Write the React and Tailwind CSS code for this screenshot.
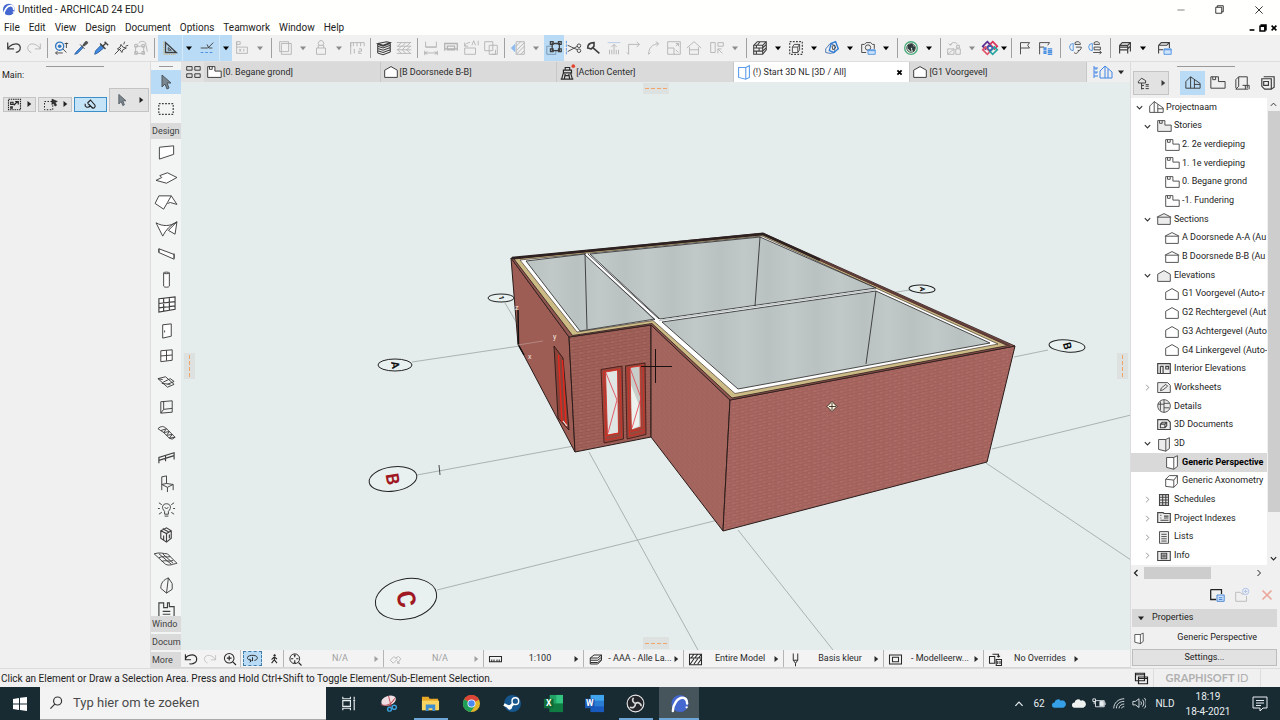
import React from 'react';
import clsx from 'clsx';

const BRICK = '#a86661';

// All glyphs are drawn on a 20x20 grid, stroke follows the text color
const glyphs = {
  undo: <path d="M3 4v7h7M3 11C6 5 16 3 17 9.500c0 3-2 5-5 5.500" strokeWidth="1.400" />,
  redo: <path d="M17 5v6h-6M17 11C14 5 4 3 3 9.500c0 3 2 5 4 5.500" />,
  find: (
    <>
      <circle cx="8.500" cy="8" r="4.500" stroke="#2f78c4" strokeWidth="1.500" />
      <circle cx="8.500" cy="8" r="2" fill="#2f78c4" stroke="none" />
      <path d="M12 11l4 4M4 15.500h8M4 15.500l2-2M4 15.500l2 2M16 4v6M14 5h4" />
    </>
  ),
  pick: (
    <>
      <path d="M11 8L5 14l-2 3 3-1 6-6z" fill="#3f8ae0" stroke="#2c5f9e" />
      <path d="M9 6l5 5M12 7l3-4c2-1 3 1 2 2l-4 3z" fill="#555" />
    </>
  ),
  inject: (
    <>
      <path d="M10 7l-6 6-1 4 4-2 6-5z" fill="#3f8ae0" stroke="#2c5f9e" />
      <path d="M9 5l6 6M12 8l4-4M14 3l4 4" strokeWidth="1.500" />
    </>
  ),
  wand: <path d="M3 17l7-7M10 6l2 3 4 1-4 2-1 3-2-3-3-1 3-2zM14 3l-1 3M18 7l-3 1" />,
  morphParam: <path d="M4 8h9v8H4zM3 6h3v3H3zM11 6h3v3h-3zM3 14h3v3H3zM11 14h3v3h-3zM7 5c2-3 6-3 8-1l2 10" />,
  triangle: (
    <>
      <path d="M5 4v11h12z" strokeWidth="1.500" />
      <path d="M8 9.500v3h3.500z" />
      <path d="M3 3v14h14" stroke="#d8a650" strokeDasharray="1 1" />
    </>
  ),
  guides: (
    <>
      <path d="M3 10h8M11 10l6-6M10 6l2 4M12 10h4" />
      <path d="M3 15h14" stroke="#3f8ae0" strokeDasharray="3 2" />
    </>
  ),
  coords: <path d="M4 3h4v3H4zM4 3v6M4 9h12v7H4zM7 11l2 3M9 11l-2 3M12 11v3" />,
  layers2: <path d="M4 3h10v11H4zM6 5h11v12H6z" />,
  stamp: <path d="M5 10h10v7H5zM7 10V7h6v3M8 7a3 3 0 1 1 4 0" />,
  ruler12: <path d="M3 17V4h15M3 4v5M6 4v4M10 4v4M14 4v4M18 4v4M7 11v5M12 11h3v2.500h-3V16h3" />,
  stack: (
    <path d="M3 5l10-2 4 1-8 3zM3 5v1l6 2 8-3V4M3 8l6 2 8-3M3 10.500l6 2 8-3M3 13l6 2 8-3M3 15.500l6 2 8-3M3 5v10.500M17 4v10.500" strokeWidth="1.200" />
  ),
  hatch: <path d="M2 4h16M2 8h16M2 12h16M2 16h16M3 8l4-4M8 8l4-4M13 8l4-4M3 12l4-4M8 12l4-4M13 12l4-4M3 12l4 4M8 12l4 4M13 12l4 4" />,
  dimA: <path d="M4 3v6h12V3M4 9h12M3 13v5M17 13v5M3 15.500h14M6 14l-3 1.500 3 1.500M14 14l3 1.500-3 1.500" />,
  dimB: <path d="M3 5h14v6H3zM6 8h8v4H6zM3 11v2M17 11v2" strokeWidth="1.400" />,
  dimC: <path d="M3 10h12v7H3zM3 8c1-3 3-4 6-4M3 8V4M3 8h4M11 7l2-5 2 5M18 2v5" />,
  dimD: <path d="M3 3h9v4h5v10H8v-4H3zM8 7h4v6H8zM15 12v5l-4 0" />,
  wallEdge: (
    <>
      <path d="M8 3h9v14H8zM8 8l5-5M8 13l9-9M8 17l9-9M13 17l4-4" />
      <path d="M7 5v10l-5-5z" fill="#8fbcec" stroke="none" />
    </>
  ),
  group: (
    <>
      <path d="M2 8h6M2 8v9h10v-5" stroke="#7593ad" />
      <path d="M8 5h8v8H8zM6 3h3v3H6zM15 3h3v3h-3zM6 11h3v3H6zM15 11h3v3h-3z" strokeWidth="1.400" />
    </>
  ),
  scissors: (
    <>
      <path d="M3 7l11 5M3 14l11-6" />
      <circle cx="15.500" cy="7.500" r="2" />
      <circle cx="15.500" cy="13" r="2" />
      <path d="M1.500 2v15" stroke="#4a90e2" strokeDasharray="3 1" />
    </>
  ),
  axe: <path d="M8 9l8 7M3 10c0-4 2-6 7-6v4l-3 3c-2 0-3-1-4-1z" strokeWidth="1.800" />,
  adjust: (
    <>
      <path d="M3 4h14" stroke="#b3cbe8" />
      <path d="M10 6v11M7 9l3-3 3 3M5 12v5M15 12v5M7.500 12v5M12.500 12v5" />
    </>
  ),
  cornerIcon: <path d="M4 17V6h12M4 17l-2-2M16 6l-3-3M16 6l-3 3" />,
  fillet: <path d="M4 17C4 10 8 6 15 5M15 5l-3-2M15 5l-2 3M4 17l2-2" />,
  resize: <path d="M3 3h14v14H3zM3 10h7v7M12 5h3v3M12 8l3-3M12 12l3 3" />,
  roofTrim: <path d="M2 10l8-7 8 7M5 9v8h10V9M5 12h10" />,
  align: <path d="M3 4h5v11H3zM11 4h6v4h-6zM11 11l5 5M11 11v5M11 11h4" />,
  brick3d: (
    <path d="M3 7l4-4h10v9l-4 5H3zM3 7h10v10M13 7l4-4M3 10h10l4-4M3 13.500h10l4-4M6 7v3M9 10v3.500M6 13.500v3.500M10 3L7 7" strokeWidth="1.200" />
  ),
  marquee3d: (
    <>
      <path d="M3 3h14v14H3z" strokeDasharray="2 1.500" strokeWidth="1.300" />
      <path d="M6 9l2-3h6v6l-2 3H6zM6 9h6v6M12 9l2-3" />
    </>
  ),
  cut3d: (
    <>
      <path d="M3 11l5-6 5 2v8l-5 1-5-1z" stroke="#3f6fae" />
      <path d="M9 5l5-2 3 8-5 4-5-2z" stroke="#2e7cd6" strokeWidth="1.500" />
      <path d="M10 8l3-1 1 3-3 2z" />
    </>
  ),
  camera: (
    <>
      <path d="M3 6h3l2-2h5l2 2h2v5M3 6v9h5" />
      <circle cx="10" cy="9.500" r="3" />
      <path d="M10 12h8v5h-8z" fill="#cfe3fb" stroke="#4a90e2" />
      <path d="M10 13h8" stroke="#4a90e2" />
    </>
  ),
  globe: (
    <>
      <circle cx="10" cy="10" r="7" stroke="#4caf7c" strokeWidth="1.500" />
      <circle cx="10" cy="10" r="4.700" fill="#dcefe5" stroke="#2f3b3a" />
      <path d="M7 7l4-1 1 2-3 2 1 3-3-3zM12 9l2 0-1 4-1-1z" fill="#2f3b3a" stroke="#2f3b3a" strokeWidth="1.500" />
    </>
  ),
  teamFade: <path d="M3 11h7v6H3zM3 17l7-6M12 11h5v6h-5zM13 7h3v3h-3zM6 7c1-4 6-4 8-1M6 7L4 5M6 7l2-2" />,
  bimx: (
    <>
      <path d="M7 3l3 3-5 5-3-3z" stroke="#5c2d91" strokeWidth="2" />
      <path d="M13 3l5 5-3 3-5-5z" stroke="#d8355b" strokeWidth="2" />
      <path d="M5 9l5 5-3 3-5-5z" stroke="#e0556d" strokeWidth="2" />
      <path d="M15 9l3 3-5 5-3-3z" stroke="#2aa6a0" strokeWidth="2" />
      <path d="M7 10l3-3 3 3-3 3z" stroke="#3b62b5" strokeWidth="1.500" />
    </>
  ),
  flag: <path d="M5 17V4h10l-2 3 2 3H5" />,
  flagList: (
    <>
      <path d="M4 17V4h11l-2 3M4 9h5" />
      <path d="M9 10h2v2H9zM13 11h5M9 14h2v2H9zM13 13h5M13 15h5M13 17h5" stroke="#4a90e2" strokeWidth="1.500" />
    </>
  ),
  linkA: (
    <>
      <path d="M8 5a4 4 0 1 0 0 8z" stroke="#4a90e2" />
      <path d="M10 4c3-2 6-1 6 2h-6zM11 9h6c0 3-2 4-4 4M9 15c2 2 4 1 5-2" />
    </>
  ),
  linkB: (
    <>
      <path d="M7 5a4 4 0 1 0 0 8z" stroke="#4a90e2" />
      <path d="M9 4c3-2 6-1 6 2H9zM9 9h7v3H9zM8 15h9M15 13l2 2-2 2" />
    </>
  ),
  bim: <path d="M4 7l3-3h9v10M4 7h9l3-3M4 7v9M13 7v9M4 12h9M4 9h9M16 8l-3 3" strokeWidth="1.300" />,
  bimSet: (
    <>
      <path d="M4 7l3-3h9v6M4 7h9l3-3M4 7v9M4 12h5" strokeWidth="1.200" />
      <path d="M10 11h8v6h-8z" fill="#cfe3fb" stroke="#4a90e2" />
      <path d="M10 12h8" stroke="#4a90e2" />
    </>
  ),
  cursor: <path d="M6 3v12l3-3 2 5 2-1-2-5h4z" fill="#7c868e" stroke="#4d565e" />,
  marquee: <path d="M2 4h16v12H2z" strokeDasharray="2 1.500" strokeWidth="1.300" />,
  wall: <path d="M2.500 5.500L17.500 4v9l-15 5z" fill="#fff" />,
  slab: <path d="M-1 13l6-3-2-2 8-3 10 5-11 6z" fill="#fff" />,
  roof: <path d="M-2 11L2 3h13l-4 7-4 7zM15 3l6 9-7-2-3 1" fill="#fff" />,
  shell: <path d="M-1 4c7 4 15 4 22-1-7 3-12 9-15 15zM21 3l-9 9 7 4z" fill="#fff" />,
  beam: <path d="M2 5l16 6v5L2 9zM2 5v4M18 10v5" fill="#fff" />,
  column: <path d="M7 3c0-1 6-1 6 0v14c0 1.500-6 1.500-6 0zM7 3c0 1.200 6 1.200 6 0" fill="#fff" />,
  curtain: <path d="M2 4l17-2v13L2 18zM7 3v14M13 2.500V16M2 9l17-2M2 13.500l17-2" fill="#fff" strokeWidth="1.200" />,
  door: <path d="M6 4l9-1v13l-9 2zM8 10v2" fill="#fff" />,
  window: <path d="M4 5l12-1v11L4 16.500zM10 4.500v11M4 10.500l12-1" fill="#fff" />,
  skylight: <path d="M1 7l8-2 9 8-7 3zM6 11l8-4 4 3-7 3M1 7l5 1M5 12l9 1" />,
  opening: <path d="M4 5l12-1v12L4 17zM7 4.500V13l9-1M7 13l-3 4" />,
  stair: <path d="M1 6c3-3 6-3 9 0l9 9M1 6l3 2 6-2-3 4 6-1-3 4 6-1-3 4 6-1M4 8l3 2M7 10l3 3M10 13l3 3 3 1 3-2" />,
  railing: <path d="M2 16v-6l16-5v7M2 10l16-5M2 13l16-5M9 8v6" strokeWidth="1.200" />,
  object: <path d="M5 3l5-1v8l-5 1zM5 11v6M5 11l6 3 6-3-7-1M11 14v5M17 11v6" />,
  lamp: (
    <>
      <path d="M8 13c-4-4-2-8 2-8s6 4 2 8v3H8zM8 18h4M8 9l2 1 2-1" />
      <path d="M1 10h2M17 10h2M2 4l3 2M18 4l-3 2M2 16l3-2M18 16l-3-2" />
    </>
  ),
  zone: <path d="M4 6l6-3 5 3v8l-5 4-6-4zM4 6l6 3 5-3M10 9v9M6 4l6 3M7 11v5M13 10v4" strokeWidth="1.200" />,
  mesh: <path d="M-3 4c6-2 10 0 14 0l10 10c-5 1-8 3-12 1zM2 4l13 11M6 4l11 10M2 8c4-2 8 0 12-1M5 12c4-2 8 1 12-1" />,
  morph: <path d="M4 13C4 7 7 4 12 2l4 6v6l-6 4zM12 2l-2 16" />,
  drawing: <path d="M2 3h5v5h4V3h2v4h5v11H2zM6 12h8M6 15h8" strokeWidth="1.200" />,
  story: <path d="M3 4v12h15V9h-7V4zM5 4v3h3V4" fill="#fff" />,
  section: <path d="M3 8h14v8H3zM2 8l8-4 8 4" />,
  elevation: <path d="M3 8l7-4 7 4v8H3z" fill="#fff" />,
  perspective: <path d="M4 5l8 0 4-2v12l-4 3-8-2zM12 5v13" fill="#fff" />,
  perspectiveBlue: <path d="M4 5l8 0 4-2v13l-4 2-8-2zM12 5v13" fill="#fff" stroke="#5b9bea" strokeWidth="1.200" />,
  axon: <path d="M3 8l4-4h9v9l-4 4-9-1zM3 8l9 1v8M12 9l4-5" fill="#fff" />,
  house: <path d="M3 16V9l5-5 10 7v5zM8 4v12M12 7v9M12 12h6" fill="#fff" />,
  houseBlue: <path d="M8 16V9l5-5 7 6v6zM13 4v12M16 7v9M2 4v12M2 6h4M2 10h4M2 14h4M4 6v2M4 10v2" stroke="#3f84e5" />,
  tower: (
    <>
      <path d="M6 8h9v3H6zM8 8V5h5v3M6 11L4 18h3l1-6M14 11l2 7h-3l-1-6M3 18h14M8 14h5" strokeWidth="1.300" />
      <circle cx="17" cy="3.500" r="2" fill="#e5432d" stroke="none" />
    </>
  ),
  gridTabs: <path d="M3 4h6v4H3zM12 4h6v4h-6zM3 12h6v4H3zM12 12h6v4h-6z" />,
  interior: <path d="M3 4h14v11H3zM6 7h3v8M6 15V7M12 7h3v3h-3z" strokeWidth="1.300" />,
  worksheet: <path d="M3 4h11l3 3v8H3zM6 13l1-3 5-4 2 2-5 4z" />,
  details: <path d="M10 3a7 7 0 1 0 .1 0M10 3v14M3 8h7M10 7h6M10 12h6M6 5v10" />,
  doc3d: <path d="M3 4h11l3 3v8H3zM6 9l2-2h5v4l-2 2H6zM6 9h5v4M11 9l2-2" strokeWidth="1.200" />,
  schedule: <path d="M5 4h10v12H5zM8.500 4v12M12 4v12M5 7h10M5 10h10M5 13h10" strokeWidth="1.200" />,
  indexes: <path d="M3 4h6l1 1h7v10H3zM6 7h1M6 10h1M6 12.500h9M10 8h5M10 10h5" strokeWidth="1.300" />,
  lists: <path d="M5 4h10v13H5zM7 7h6M7 9.500h6M7 12h6M7 14.500h6" />,
  info: <path d="M3 5h14v10H3zM7 7h6v6H7zM8 9h4M8 11h4" strokeWidth="1.200" />,
  layoutBook: <path d="M3 16V7l3-3v10l-3 3h13M6 4h9v8M15 12v4M10 13h7v4M13 13v4" />,
  publisher: <path d="M6 4h11v9M17 4v11l-3 2M4 6h10v11H7l-3-3zM6 9h5v4H6z" strokeWidth="1.200" />,
  navTree: <path d="M3 8l4-4 5 3v3H3zM7 10v8M7 13h3M7 17h3M12 12h4M12 14h4M12 17h4" strokeWidth="1.200" />,
  favorites: (
    <>
      <path d="M2 3h16v14H2z" strokeDasharray="2 1" strokeWidth="1.500" />
      <path d="M5 7h3v3H5zM5 13h2v2H5zM9 11l5-5M11 6h4v4" strokeWidth="1.600" />
    </>
  ),
  marqueeArrow: (
    <>
      <path d="M2 6h11v11H2z" strokeDasharray="2 2" strokeWidth="1.300" />
      <path d="M12 3l7 3-3 1 2 4-2 1-2-4-2 2z" fill="#333" />
    </>
  ),
  magnet: <path d="M6 8l6 6c2 2 5 0 4-3l-6-7M6 8l4-4 6 7M10 12c-5 4-8 0-7-3" strokeWidth="1.500" />,
  back: <path d="M3 4v7h7M3 11c0-6 12-9 14-2 1 5-4 8-9 7" strokeWidth="1.400" />,
  zoomIn: (
    <>
      <circle cx="9" cy="9" r="6" strokeWidth="1.300" />
      <path d="M13.500 13.500l4 4M6 9h6M9 6v6" strokeWidth="1.500" />
    </>
  ),
  zoomFit: (
    <>
      <circle cx="9" cy="9" r="6.500" strokeWidth="1.300" />
      <path d="M14 14l4 4M9 4v3M9 11v3M4 9h3M11 9h3M8 5l1-1 1 1M8 13l1 1 1-1" strokeWidth="1.500" />
    </>
  ),
  orbit: <path d="M13 13c5-1 6-5 2-7-4-1.500-9-1-12 1-2 3 0 5 5 6M8 13l-3-2M8 13l-2 3M10 8v6" strokeWidth="1.500" />,
  walk: (
    <>
      <circle cx="11" cy="4" r="1.500" fill="currentColor" />
      <path d="M10 7l1 5 4 5M10 12l-4 5M10 7l-4 4M11 7l4 3" strokeWidth="1.800" />
    </>
  ),
  orient: <path d="M3 11l5-5 4 4-5 5zM10 8l4-2 3 3-4 6M13 15v-3M13 15h3" />,
  scale: <path d="M2 6h16v7H2zM5 10v3M8 10v3M12 10v3M15 10v3" strokeWidth="1.400" />,
  layerStack: <path d="M3 8l5-4h10l-5 4zM3 8v3h10l5-4M3 11v3h10l5-4M3 14v2h10l5-5V4" strokeWidth="1.300" />,
  structure: <path d="M2 3h16v14H2zM2 8h16M4 8l4-5M9 8l4-5M14 8l4-5M3 16l5-7M8 16l5-7M13 16l5-7" strokeWidth="1.400" />,
  pen: <path d="M7 2v9l3 4 3-4V2M10 15v4M7 11h6" strokeWidth="1.300" />,
  modelView: <path d="M2 4h16v12H2zM6 7h8v6H6z" strokeWidth="1.400" />,
  overrides: <path d="M2 6h7v9H2zM6 3h8v4M14 7l-2-2M14 7l2-2M11 10h7v8h-7zM13 12v4M16 12v4" strokeWidth="1.400" />,
  propsBox: (
    <>
      <path d="M3 4h12v5M3 4v11h6" strokeWidth="1.400" />
      <path d="M10 10h8v7h-8z" fill="#cfe3fb" stroke="#3f7fd0" />
      <path d="M12 13h4M12 15h4" stroke="#3f7fd0" />
    </>
  ),
  newFolder: (
    <>
      <path d="M3 17V7h5l2 2h2M3 17h12v-6" />
      <circle cx="14" cy="6" r="3.500" stroke="#a9bfe8" />
      <path d="M12 6h4M14 4v4" stroke="#a9bfe8" />
    </>
  ),
  remove: <path d="M5 5l10 10M15 5L5 15" strokeWidth="1.800" />,
  windows2: <path d="M2 3h12v10H2zM2 5h12M6 8h12v9H6zM6 10h12" fill="#f0f0f0" strokeWidth="1.600" />,
  chevronDown: <path d="M4 7l6 6 6-6" strokeWidth="2.500" />,
  chevronRight: <path d="M7 4l6 6-6 6" strokeWidth="2" />,
  chevronLeft: <path d="M13 4l-6 6 6 6" strokeWidth="2.500" />,
  chevronUp: <path d="M4 13l6-6 6 6" strokeWidth="2" />,
  minimize: <path d="M4 10h12" />,
  restore: <path d="M5 7h8v8H5zM7 7V5h8v8h-2" />,
  close: <path d="M4 4l12 12M16 4L4 16" />,
  search: (
    <>
      <circle cx="12" cy="7.500" r="5" strokeWidth="1.500" />
      <path d="M8.500 11.500L3 17" strokeWidth="1.500" />
    </>
  ),
};

const Glyph = ({ name, className = 'size-5' }) => (
  <svg
    viewBox="0 0 20 20"
    className={clsx('shrink-0 overflow-visible', className)}
    fill="none"
    stroke="currentColor"
    strokeWidth="1"
    aria-hidden="true"
  >
    {glyphs[name]}
  </svg>
);

const Caret = ({ right, className }) => (
  <svg viewBox="0 0 8 8" className={clsx('shrink-0', className)} fill="currentColor" aria-hidden="true">
    {right ? <path d="M2 0l5 4-5 4z" /> : <path d="M0 2h8L4 7z" />}
  </svg>
);

const menus = ['File', 'Edit', 'View', 'Design', 'Document', 'Options', 'Teamwork', 'Window', 'Help'];

const toolbar = [
  { icon: 'undo' }, { icon: 'redo', off: true }, 'sep',
  { icon: 'find' }, { icon: 'pick' }, { icon: 'inject' }, { icon: 'wand' }, { icon: 'morphParam', off: true }, 'sep',
  { icon: 'triangle', caret: true, on: true }, { icon: 'guides', caret: true, on: true }, { icon: 'coords', caret: true, off: true }, 'sep',
  { icon: 'layers2', caret: true, off: true }, { icon: 'stamp', caret: true, off: true }, { icon: 'ruler12', off: true }, 'sep',
  { icon: 'stack' }, { icon: 'hatch', off: true }, 'sep',
  { icon: 'dimA', off: true }, { icon: 'dimB', off: true }, { icon: 'dimC', off: true }, { icon: 'dimD', off: true }, 'sep',
  { icon: 'wallEdge', caret: true, off: true }, { icon: 'group', on: true }, { icon: 'scissors' }, { icon: 'axe' },
  { icon: 'adjust', off: true }, { icon: 'cornerIcon', off: true }, { icon: 'fillet', off: true }, { icon: 'resize', off: true },
  { icon: 'roofTrim', off: true }, { icon: 'align', caret: true, off: true, gap: true }, 'sep',
  { icon: 'brick3d', caret: true }, { icon: 'marquee3d', caret: true }, { icon: 'cut3d', caret: true }, { icon: 'camera', caret: true }, 'sep',
  { icon: 'globe', caret: true }, 'sep',
  { icon: 'teamFade', caret: true, off: true }, { icon: 'bimx', caret: true, tight: true }, 'sep',
  { icon: 'flag' }, { icon: 'flagList' }, 'wide',
  { icon: 'linkA' }, { icon: 'linkB' }, 'wide',
  { icon: 'bim', caret: true }, { icon: 'bimSet', gap: true },
];

const designTools = [
  'wall', 'slab', 'roof', 'shell', 'beam', 'column', 'curtain', 'door', 'window', 'skylight',
  'opening', 'stair', 'railing', 'object', 'lamp', 'zone', 'mesh', 'morph', 'drawing',
];

const tabs = [
  { label: '[0. Begane grond]', icon: 'story' },
  { label: '[B Doorsnede B-B]', icon: 'elevation' },
  { label: '[Action Center]', icon: 'tower' },
  { label: '(!) Start 3D NL [3D / All]', icon: 'perspectiveBlue', active: true },
  { label: '[G1 Voorgevel]', icon: 'elevation' },
];

const tree = [
  { level: 0, label: 'Projectnaam', icon: 'house', open: true },
  { level: 1, label: 'Stories', icon: 'story', open: true },
  { level: 2, label: '2. 2e verdieping', icon: 'story' },
  { level: 2, label: '1. 1e verdieping', icon: 'story' },
  { level: 2, label: '0. Begane grond', icon: 'story' },
  { level: 2, label: '-1. Fundering', icon: 'story' },
  { level: 1, label: 'Sections', icon: 'section', open: true },
  { level: 2, label: 'A Doorsnede A-A (Au', icon: 'section' },
  { level: 2, label: 'B Doorsnede B-B (Au', icon: 'section' },
  { level: 1, label: 'Elevations', icon: 'elevation', open: true },
  { level: 2, label: 'G1 Voorgevel (Auto-r', icon: 'elevation' },
  { level: 2, label: 'G2 Rechtergevel (Aut', icon: 'elevation' },
  { level: 2, label: 'G3 Achtergevel (Auto', icon: 'elevation' },
  { level: 2, label: 'G4 Linkergevel (Auto-', icon: 'elevation' },
  { level: 1, label: 'Interior Elevations', icon: 'interior' },
  { level: 1, label: 'Worksheets', icon: 'worksheet', open: false },
  { level: 1, label: 'Details', icon: 'details' },
  { level: 1, label: '3D Documents', icon: 'doc3d' },
  { level: 1, label: '3D', icon: 'perspective', open: true },
  { level: 2, label: 'Generic Perspective', icon: 'perspective', selected: true },
  { level: 2, label: 'Generic Axonometry', icon: 'axon' },
  { level: 1, label: 'Schedules', icon: 'schedule', open: false },
  { level: 1, label: 'Project Indexes', icon: 'indexes', open: false },
  { level: 1, label: 'Lists', icon: 'lists', open: false },
  { level: 1, label: 'Info', icon: 'info', open: false },
];

const quickOptions = [
  { icon: 'zoomFit', label: 'N/A', offLabel: true },
  { icon: 'orient', label: 'N/A', offLabel: true, offIcon: true },
  { icon: 'scale', label: '1:100' },
  { icon: 'layerStack', label: '- AAA - Alle La...' },
  { icon: 'structure', label: 'Entire Model' },
  { icon: 'pen', label: 'Basis kleur' },
  { icon: 'modelView', label: '- Modelleerw...' },
  { icon: 'overrides', label: 'No Overrides' },
];

const AppLogo = ({ className }) => (
  <svg viewBox="0 0 20 20" className={className} aria-hidden="true">
    <circle cx="10.500" cy="10" r="9" fill="#4468cf" />
    <path d="M3 18C3 11 8 4 13 4c3 0 5 2 5 6" fill="none" stroke="#fff" strokeWidth="2.500" strokeLinecap="round" />
    <circle cx="17.500" cy="14" r="1.200" fill="#fff" />
  </svg>
);

const TitleBar = () => (
  <header className="bg-[#fffffd]">
    <div className="flex h-[19px] items-center pl-[2px]">
      <AppLogo className="size-[13px]" />
      <h1 className="ml-[3px] flex-1 text-[10px] text-[#222]">Untitled - ARCHICAD 24 EDU</h1>
      <button aria-label="Minimize" className="flex w-[38px] justify-center text-[#777]"><Glyph name="minimize" className="size-3 stroke-[1.5]" /></button>
      <button aria-label="Restore" className="flex w-[38px] justify-center text-[#222]"><Glyph name="restore" className="size-[15px] stroke-[1.2]" /></button>
      <button aria-label="Close" className="flex w-[42px] justify-center text-[#222]"><Glyph name="close" className="size-3 stroke-[1.5]" /></button>
    </div>
    <div className="flex h-4 items-center pt-px pl-1 text-[10px] text-[#222]">
      <nav className="flex flex-1 gap-[9px]">
        {menus.map((m) => (
          <button key={m}>{m}</button>
        ))}
      </nav>
      <div className="flex items-end gap-px pr-[2px] text-black">
        <button aria-label="Minimize view"><Glyph name="minimize" className="size-2 stroke-[4]" /></button>
        <button aria-label="Restore view"><Glyph name="restore" className="size-3 stroke-[2.5]" /></button>
        <button aria-label="Close view" className="pb-[2px]"><Glyph name="close" className="size-2 stroke-[4]" /></button>
      </div>
    </div>
  </header>
);

const Toolbar = () => (
  <div className="flex h-[27px] items-stretch border-b border-[#dedede] bg-[#f1f1f1] pl-1">
    {toolbar.map((t, i) => {
      if (t === 'sep' || t === 'wide') {
        return (
          <div key={i} className={clsx('flex shrink-0 justify-center py-[3px]', t === 'wide' ? 'w-[10px]' : 'w-[7px]')}>
            <div className="w-px bg-[#a0a0a0]" />
          </div>
        );
      }
      const wide = t.on && t.caret;
      return (
        <div
          key={i}
          className={clsx('flex shrink-0', t.on && 'bg-[#b9dbf5]', t.off ? 'text-[#b3b3b3]' : 'text-[#3f3f3f]', t.gap && 'ml-[3px]')}
        >
          <button aria-label={t.icon} className={clsx('flex items-center justify-center', wide ? 'w-6' : 'w-5')}>
            <Glyph name={t.icon} className="size-[18px]" />
          </button>
          {t.caret && (
            <button
              aria-label={`${t.icon} options`}
              className={clsx(
                'flex items-center justify-center',
                wide ? 'w-[13px] border-l border-[#d4e9fa]' : t.tight ? 'w-2' : 'w-4',
                t.off ? 'text-[#8c8c8c]' : 'text-black'
              )}
            >
              <Caret className="size-[6px]" />
            </button>
          )}
        </div>
      );
    })}
  </div>
);

const InfoPanel = () => (
  <aside className="w-[150px] shrink-0 bg-[#f0f0f0] text-[9px] text-[#222]">
    <div className="mx-auto mt-1 h-px w-[58px] bg-[#999]" />
    <p className="mt-[2px] pl-[2px]">Main:</p>
    <div className="mt-[5px] flex items-end gap-[2px] pl-[3px]">
      <button aria-label="Favorites" className="flex h-[15px] w-[33px] items-center justify-center gap-1 border border-[#c4c4c4] bg-[#e3e3e3]">
        <Glyph name="favorites" className="size-[15px]" /><Caret right className="size-[6px]" />
      </button>
      <button aria-label="Selection area" className="flex h-[15px] w-[34px] items-center justify-center gap-1 border border-[#c4c4c4] bg-[#e3e3e3]">
        <Glyph name="marqueeArrow" className="size-[15px]" /><Caret right className="size-[6px]" />
      </button>
      <button aria-label="Magnet" className="flex h-[15px] w-[33px] items-center justify-center border border-[#3c8fc9] bg-[#c6e4f8]">
        <Glyph name="magnet" className="size-[15px]" />
      </button>
      <button aria-label="Arrow tool" className="flex h-6 w-[40px] items-center justify-center gap-2 border border-[#c4c4c4] bg-[#e3e3e3]">
        <Glyph name="cursor" className="size-4" /><Caret right className="size-[6px]" />
      </button>
    </div>
  </aside>
);

const Toolbox = () => (
  <aside className="flex w-[31px] shrink-0 flex-col border-l border-[#ddd] bg-[#f3f4f4] text-[9px] text-[#3f3f3f]">
    <div className="mx-auto mt-1 mb-[3px] h-px w-[14px] shrink-0 bg-[#999]" />
    <button aria-label="Arrow" className="flex h-6 shrink-0 items-center justify-center bg-[#b9dbf5]"><Glyph name="cursor" /></button>
    <button aria-label="Marquee" className="flex h-[29px] shrink-0 items-center justify-center"><Glyph name="marquee" className="size-[18px]" /></button>
    <h2 className="h-4 shrink-0 bg-[#dadada] pl-px leading-4">Design</h2>
    <div className="flex min-h-0 flex-1 flex-col justify-between overflow-hidden">
      {designTools.map((t, i) => (
        <button
          key={t}
          aria-label={t}
          className={clsx(
            'flex shrink-0 justify-center',
            i === designTools.length - 1 ? 'h-[18px] items-start pt-[2px]' : 'h-[25px] items-center'
          )}
        >
          <Glyph name={t} className="size-[19px]" />
        </button>
      ))}
    </div>
    <div className="z-10 flex shrink-0 flex-col gap-[2px] bg-[#f3f4f4] leading-4">
      {['Windo', 'Docum', 'More'].map((l) => (
        <button key={l} className="h-4 bg-[#dadada] pl-px text-left">{l}</button>
      ))}
    </div>
  </aside>
);

const Tabs = () => (
  <div className="flex h-5 shrink-0 bg-[#e2e2e2] text-[9px] text-[#2a2a2a]">
    <button aria-label="All tabs" className="flex w-[23px] items-center justify-center"><Glyph name="gridTabs" className="size-[18px]" /></button>
    {tabs.map((t) => (
      <div key={t.label} className={clsx('flex min-w-0 flex-1 items-center border-r border-[#c8c8c8] pr-[6px]', t.active ? 'bg-white' : 'bg-[#dadada]')}>
        <button className="flex flex-1 items-center whitespace-nowrap pl-px text-left">
          <Glyph name={t.icon} className="size-[18px]" /><span className="pt-px">{t.label}</span>
        </button>
        {t.active && (
          <button aria-label="Close tab" className="text-black"><Glyph name="close" className="size-[7px] stroke-[5]" /></button>
        )}
      </div>
    ))}
    <div className="flex w-[43px] items-center justify-center gap-[6px] bg-[#efefef]">
      <Glyph name="houseBlue" /><Caret className="size-[6px]" />
    </div>
  </div>
);

const AxisBubble = ({ x, y, rx, ry, tilt = 0, label, size, color = '#111', turn = 0 }) => (
  <g>
    <ellipse cx={x} cy={y} rx={rx} ry={ry} fill="#e8f0f0" stroke="#222" transform={`rotate(${tilt} ${x} ${y})`} />
    <text x={x} y={y} fontSize={size} fontWeight="700" fill={color} textAnchor="middle" dominantBaseline="central" transform={`rotate(${turn} ${x} ${y})`}>
      {label}
    </text>
  </g>
);

const Scene = () => (
  <svg viewBox="181 82 949 568" preserveAspectRatio="xMidYMid slice" className="block size-full" role="img" aria-label="3D model">
    <defs>
      <pattern id="brickRight" width="9" height="6" patternUnits="userSpaceOnUse" patternTransform="matrix(1 -0.2 0 1 0 0)">
        <rect width="9" height="6" fill={BRICK} />
        <path d="M0 .5h9M0 3.500h9M2 .5v3M6.500 3.500v3" stroke="#8d4d4a" strokeWidth=".7" opacity=".4" />
        <path d="M3 2h3M7 5h2" stroke="#bd7d75" strokeWidth="1" opacity=".5" />
      </pattern>
      <pattern id="brickFront" width="8" height="6" patternUnits="userSpaceOnUse" patternTransform="matrix(1 -0.16 0 1 0 0)">
        <rect width="8" height="6" fill="#a06159" />
        <path d="M0 .5h8M0 3.500h8M2 .5v3M6 3.500v3" stroke="#834843" strokeWidth=".7" opacity=".5" />
        <path d="M3 2h3" stroke="#b7786d" strokeWidth="1" opacity=".5" />
      </pattern>
      <pattern id="brickSide" width="5" height="5" patternUnits="userSpaceOnUse" patternTransform="matrix(1 1.2 0 1 0 0)">
        <rect width="5" height="5" fill="#a5665f" />
        <path d="M0 .5h5M2 .5v4" stroke="#925049" strokeWidth=".6" opacity=".3" />
      </pattern>
      <linearGradient id="plaster" x1="0" x2="24" y1="0" y2="0" gradientUnits="userSpaceOnUse" spreadMethod="reflect">
        <stop offset="0" stopColor="#bac1c1" />
        <stop offset="1" stopColor="#c1c8c8" />
      </linearGradient>
    </defs>
    <rect x="0" y="0" width="1400" height="760" fill="#e4edec" />

    {/* grid axes */}
    <g stroke="#9aa3a3" strokeWidth=".8">
      <path d="M412 362L560 340M417 475L590 443M437 590L730 517M589 452L698 650M738 530L833 650M986 463L1131 560M992 449L1131 415M1048 350L1014 357M505 303L518 325M890 293L910 290" />
      <path d="M439 465l1 10" stroke="#222" />
    </g>
    <AxisBubble x={501} y={298} rx={13} ry={4} label="1" size={7} turn={80} />
    <AxisBubble x={922} y={289} rx={13} ry={4} tilt={3} label="A" size={7} turn={90} />
    <AxisBubble x={395} y={365} rx={17} ry={6} label="A" size={11} turn={80} />
    <AxisBubble x={1067} y={346} rx={18} ry={6} tilt={5} label="B" size={11} turn={75} />
    <AxisBubble x={393} y={479} rx={24} ry={12} tilt={-8} label="B" size={18} color="#a01822" turn={80} />
    <AxisBubble x={406} y={599} rx={31} ry={20} tilt={-12} label="C" size={25} color="#a01822" turn={75} />

    {/* outer walls */}
    <g stroke="#2a1c1a" strokeWidth="1" strokeLinejoin="round">
      <path d="M511 258L569 337L575 452L518 344z" fill="#9d5d55" />
      <path d="M569 337L651 325V437L575 452z" fill="url(#brickFront)" />
      <path d="M651 325L730 400L723 531L651 437z" fill="url(#brickSide)" />
      <path d="M730 400L1015 346L987 462L723 531z" fill="url(#brickRight)" />
      {/* top of the cavity wall, outside to inside */}
      <path d="M511 258L763 233L1015 346L730 400L651 325L569 337z" fill="#8f5550" strokeWidth=".8" />
      <path d="M514 259L763 234.500L1008 345.500L732 398L652 323.500L572.500 335.500z" fill="#cdbb86" strokeWidth=".8" />
      <path d="M520 260L762 236L998 344L735 393.500L653 320.500L577 332z" fill="#fff" strokeWidth=".6" />
    </g>
    <path d="M512 258L763 234L820 260" fill="none" stroke="#2c2120" strokeWidth="2.500" />
    <path d="M820 260L1010 346" fill="none" stroke="#5d3b37" strokeWidth="2" />

    {/* rooms */}
    <g fill="url(#plaster)" stroke="#222" strokeWidth=".8">
      <path d="M526 261L585 254L655 319L580 331z" />
      <path d="M590 254L760 237L876 288L660 319z" />
      <path d="M662 322L876 291L990 343L738 389z" />
      <path d="M585 254L587 329M760 237L755 306M876 291L866 364" />
    </g>
    <path d="M659 320.500L876 289.500" stroke="#c3c9c9" strokeWidth="1.600" />
    <path d="M586 254L658 320" stroke="#fff" strokeWidth="2.500" />
    <path d="M584.500 254.500L655 320M588 254L659 319" stroke="#222" strokeWidth=".8" />

    {/* windows */}
    <path d="M554 346L563 358L569 430L558 418z" fill="#8a4238" stroke="#1d1110" strokeWidth=".8" />
    <path d="M558.500 355L562 422M562.500 360L566 426" stroke="#e8261c" strokeWidth="1.400" />
    <path d="M563 421l4 5" stroke="#eee" strokeWidth="1.200" />
    <g strokeWidth=".8">
      <path d="M601 369.500L622 366L623.500 439L604 443z" fill="#96493f" stroke="#3d1410" />
      <path d="M625.500 366L645 363L646 434.500L627 439z" fill="#96493f" stroke="#3d1410" />
      <path d="M603.500 371.500L620 369L621.500 437L606 440z" fill="none" stroke="#dd2a20" />
      <path d="M628 368L643 365.500L644 432.500L629.500 436z" fill="none" stroke="#dd2a20" />
      <path d="M605.500 372L617.500 370L618.500 433L607.500 435z" fill="#dfe6e3" stroke="#d3231b" />
      <path d="M630 367.500L640 366L641 427L631.500 430z" fill="#c7cec9" stroke="#d3231b" />
      <path d="M631 385L639 405V426L632 429z" fill="#eef2ee" />
      <path d="M606 373L617 400L608 433M630 368L641 398L632 428" fill="none" stroke="#e23a4a" />
      <path d="M605 436l14-3M629 432l14-3" stroke="#dd2a20" />
    </g>

    <path d="M518 310L518.500 345L524 355" fill="none" stroke="#111" strokeWidth="1.500" />
    <path d="M518 345L543 341" stroke="#b8928c" strokeWidth=".8" />
    <g fill="#f3e6dc" fontSize="7">
      <text x="515" y="310">z</text>
      <text x="553" y="339">y</text>
      <text x="528" y="359">x</text>
    </g>

    {/* crosshair and orbit cursor */}
    <path d="M655.500 349v34M641 366.500h31" stroke="#1a1010" />
    <g stroke="#201510" strokeWidth=".8" fill="#fff6df">
      <path d="M832 401.500L837 406.500L832 411.500L827 406.500z" />
      <path d="M832 403v7M829 406.500h7" />
    </g>

    {/* palette docking handles */}
    <g fill="#dde1df">
      <rect x="643" y="83" width="26" height="11" />
      <rect x="643" y="637" width="26" height="12" />
      <rect x="184" y="353" width="11" height="26" />
      <rect x="1117" y="353" width="11" height="26" />
    </g>
    <g fill="#f0a566">
      <path d="M645 88h4v1h-4zM651 88h4v1h-4zM657 88h4v1h-4zM663 88h4v1h-4z" />
      <path d="M645 643h4v1h-4zM651 643h4v1h-4zM657 643h4v1h-4zM663 643h4v1h-4z" />
      <path d="M189 355h1v4h-1zM189 361h1v4h-1zM189 367h1v4h-1zM189 373h1v4h-1z" />
      <path d="M1122 355h1v4h-1zM1122 361h1v4h-1zM1122 367h1v4h-1zM1122 373h1v4h-1z" />
    </g>
  </svg>
);

const QuickOptions = () => (
  <div className="flex h-[18px] shrink-0 items-stretch overflow-hidden border-b border-[#d5d5d5] bg-[#f3f3f3] text-[9px] text-[#2a2a2a]">
    <div className="flex w-[60px] shrink-0 items-center justify-around border-r border-[#c2c2c2]">
      <button aria-label="Previous zoom"><Glyph name="back" className="size-4" /></button>
      <button aria-label="Next zoom" className="text-[#bbb]"><Glyph name="redo" className="size-4" /></button>
      <button aria-label="Zoom"><Glyph name="zoomIn" className="size-4" /></button>
    </div>
    <div className="flex w-[42px] shrink-0 items-center gap-[2px] pl-[2px]">
      <button aria-label="Orbit" className="flex h-[15px] w-[19px] items-center justify-center border border-dashed border-[#3d7cab] bg-[#b9dbf5]">
        <Glyph name="orbit" className="size-[13px]" />
      </button>
      <button aria-label="Explore" className="flex flex-1 justify-center"><Glyph name="walk" className="size-3" /></button>
    </div>
    {quickOptions.map((q, i) => (
      <button key={i} className="flex w-[100px] shrink-0 items-center border-l border-[#b5b5b5] pt-px pr-1 pl-1">
        <Glyph name={q.icon} className={clsx('size-[15px]', q.offIcon && 'text-[#aaa]')} />
        <span className={clsx('flex-1 whitespace-nowrap pl-1 text-center', q.offLabel && 'text-[#a0a0a0]')}>{q.label}</span>
        <Caret right className={clsx('size-[6px]', q.offLabel && 'text-[#a0a0a0]')} />
      </button>
    ))}
  </div>
);

const Navigator = () => (
  <aside className="flex w-[150px] shrink-0 flex-col border-l border-[#dcdcdc] bg-[#f0f0f0] text-[9px] text-[#222]">
    <div className="mx-auto mt-1 h-px w-[58px] shrink-0 bg-[#999]" />
    <div className="flex h-[31px] shrink-0 items-center justify-between pl-[2px] text-[#3a3a3a]">
      <button aria-label="Project chooser" className="flex h-6 w-9 items-center justify-center gap-2 border border-[#c4c4c4] bg-[#e2e2e2]">
        <Glyph name="navTree" className="size-4" /><Caret right className="size-[6px]" />
      </button>
      <div className="flex">
        {['house', 'story', 'layoutBook', 'publisher'].map((n, i) => (
          <button key={n} aria-label={n} className={clsx('flex h-6 w-[25px] items-center justify-center', i === 0 && 'bg-[#b9dbf5]')}>
            <Glyph name={n} className="size-[19px] [&_*]:fill-none" />
          </button>
        ))}
      </div>
    </div>
    <div className="flex min-h-0 flex-1">
      <ul className="flex min-w-0 flex-1 flex-col overflow-hidden bg-white">
        {tree.map((n) => (
          <li key={n.label} className={clsx('min-h-0 flex-1', n.selected && 'bg-[#d9d9d9] font-bold text-black')}>
            <button
              className={clsx(
                'flex size-full items-center whitespace-nowrap text-left',
                n.level === 1 && 'pl-2',
                n.level === 2 && 'pl-4'
              )}
            >
              <span className={clsx('flex w-4 shrink-0 justify-center', n.open ? 'text-[#333]' : 'text-[#888]')}>
                {n.open !== undefined && <Glyph name={n.open ? 'chevronDown' : 'chevronRight'} className="size-[9px]" />}
              </span>
              <Glyph name={n.icon} className={clsx('mr-px size-[18px] text-[#444]', n.level === 1 && '[&_*]:fill-[#ececec]')} />
              <span>{n.label}</span>
            </button>
          </li>
        ))}
      </ul>
      <div className="flex w-[13px] shrink-0 flex-col items-center">
        <Glyph name="chevronUp" className="my-[2px] size-[9px]" />
        <div className="w-3 flex-[406] bg-[#cdcdcd]" />
        <div className="flex-[40]" />
        <Glyph name="chevronDown" className="my-[2px] size-[9px]" />
      </div>
    </div>
    <div className="flex h-4 shrink-0 items-center pr-4">
      <Glyph name="chevronLeft" className="size-[10px]" />
      <div className="ml-[3px] h-3 w-[67px] bg-[#cdcdcd]" />
      <div className="flex-1" />
      <Glyph name="chevronRight" className="size-[10px]" />
    </div>
    <div className="flex h-7 shrink-0 items-center justify-end gap-[7px] pr-1">
      <button aria-label="Settings"><Glyph name="propsBox" className="size-[18px]" /></button>
      <button aria-label="New folder" className="text-[#b9b9b9]"><Glyph name="newFolder" className="size-[18px]" /></button>
      <button aria-label="Delete" className="text-[#eba79b]"><Glyph name="remove" className="size-[18px]" /></button>
    </div>
    <div className="mr-[3px] ml-px shrink-0">
      <button className="flex h-[18px] w-full items-center gap-2 bg-[#d7d7d7] pl-[6px]"><Caret className="size-[6px]" />Properties</button>
      <div className="flex h-[22px] items-center">
        <Glyph name="perspective" className="size-[14px]" />
        <span className="flex-1 pr-5 text-right">Generic Perspective</span>
      </div>
      <button className="mb-[2px] block h-[17px] w-full border border-[#bdbdbd] bg-[#e2e2e2]">Settings...</button>
    </div>
  </aside>
);

const StatusBar = () => (
  <footer className="flex h-[19px] shrink-0 items-center border-t border-[#dcdcdc] bg-[#f1f0f0] text-[10px] text-[#222]">
    <p className="flex-1 pl-px">Click an Element or Draw a Selection Area. Press and Hold Ctrl+Shift to Toggle Element/Sub-Element Selection.</p>
    <button aria-label="Windows" className="flex w-6 justify-center"><Glyph name="windows2" className="size-[15px]" /></button>
    <span className="h-full w-[108px] border-x border-[#ddd] text-center font-['Lato'] text-[11px] font-bold leading-[18px] text-[#b0b0b0]">
      GRAPHISOFT <span className="font-normal">ID</span>
    </span>
    <span className="w-[19px]" />
  </footer>
);

const taskIcons = {
  tasks: <path d="M4 3v2h8V3M4 17v-2h8v2M4 7h8v6H4zM16 3v3M16 8v9M15 7h2" fill="none" stroke="#e8eef0" strokeWidth="1.200" />,
  snip: (
    <>
      <ellipse cx="9" cy="7" rx="8" ry="5" fill="#f0dfe2" transform="rotate(-20 9 7)" />
      <path d="M1 11c3 2 10 1 14-5M9 2l3 12M16 4L9 13" fill="none" stroke="#c04a55" />
      <circle cx="10" cy="16" r="2" fill="none" stroke="#3ba0dc" strokeWidth="1.500" />
      <circle cx="15" cy="14" r="2.200" fill="none" stroke="#3ba0dc" strokeWidth="1.500" />
    </>
  ),
  explorer: (
    <>
      <path d="M1 3h7l1 2h9v12H1z" fill="#e9a927" />
      <path d="M1 7h18v10H1z" fill="#fbd561" />
      <path d="M5 11h10v7h-3v-3H8v3H5z" fill="#3d8ed0" />
    </>
  ),
  chrome: (
    <>
      <circle cx="10" cy="10" r="9" fill="#e2b52b" />
      <path d="M10 10L2.200 5.500A9 9 0 0 1 18 6z" fill="#db4437" />
      <path d="M10 10L2.200 5.500A9 9 0 0 0 9 19l5-7z" fill="#1e9e58" />
      <circle cx="10" cy="10" r="4.200" fill="#fff" />
      <circle cx="10" cy="10" r="3.400" fill="#4a87f0" />
    </>
  ),
  steam: (
    <>
      <circle cx="10" cy="10" r="9" fill="#17568c" />
      <path d="M1 11l6 3 6-6" stroke="#fff" strokeWidth="3" fill="none" />
      <circle cx="13" cy="7.500" r="3.500" fill="#17568c" stroke="#fff" strokeWidth="1.500" />
      <circle cx="7" cy="14" r="2.500" fill="#fff" />
    </>
  ),
  excel: (
    <>
      <path d="M6 1h14v18H6z" fill="#21a366" />
      <path d="M13 1h7v9h-7z" fill="#33c481" />
      <path d="M6 10h14v9H6z" fill="#107c41" />
      <path d="M0 5h10v10H0z" fill="#0f6b38" />
      <text x="5" y="13" fontSize="9" fontWeight="700" fill="#fff" textAnchor="middle">X</text>
    </>
  ),
  word: (
    <>
      <path d="M6 1h14v18H6z" fill="#2b7cd3" />
      <path d="M6 1h14v6H6z" fill="#41a5ee" />
      <path d="M6 13h14v6H6z" fill="#185abd" />
      <path d="M0 5h10v10H0z" fill="#1c59b5" />
      <text x="5" y="13" fontSize="9" fontWeight="700" fill="#fff" textAnchor="middle">W</text>
    </>
  ),
  obs: (
    <>
      <circle cx="10" cy="10" r="8.800" fill="#23252b" stroke="#e6e6e6" strokeWidth="1.200" />
      <path d="M10 10c-3-1-4-4-2-6M10 10c3-2 6 0 6 3M10 10c0 4-3 5-6 4" fill="none" stroke="#d8d8d8" strokeWidth="1.800" />
    </>
  ),
};

const taskbarApps = [
  { id: 'tasks' }, { id: 'snip' }, { id: 'explorer', running: true }, { id: 'chrome' }, { id: 'steam' },
  { id: 'excel' }, { id: 'word' }, { id: 'obs', running: true },
];

const Taskbar = () => (
  <div className="flex h-[33px] shrink-0 bg-[#182a32] text-[#e8eef0]">
    <button aria-label="Start" className="flex w-10 items-center justify-center">
      <svg viewBox="0 0 14 14" className="size-[14px]" fill="#fff" aria-hidden="true">
        <path d="M0 2l6-1v5.500H0zM7 .8L14 0v6.500H7zM0 7.500h6V13l-6-1zM7 7.500h7V14l-7-.9z" />
      </svg>
    </button>
    <label className="flex w-[286px] items-center gap-[9px] border-b border-[#aaa] bg-[#f3f3f3] pl-2 text-[#333]">
      <Glyph name="search" className="size-4" />
      <input
        aria-label="Search"
        className="min-w-0 flex-1 bg-transparent text-[13px] outline-none placeholder:text-[#4a4a4a]"
        placeholder="Typ hier om te zoeken"
      />
    </label>
    <div className="flex pl-[2px]">
      {taskbarApps.map((a) => (
        <button key={a.id} aria-label={a.id} className="flex w-[41px] flex-col items-center justify-between">
          <span className="h-px" />
          <svg viewBox="0 0 20 20" className="size-[19px] overflow-visible">{taskIcons[a.id]}</svg>
          <span className={clsx('h-[2px] w-[34px]', a.running && 'bg-[#6ea6d8]')} />
        </button>
      ))}
      <button aria-label="Archicad" className="ml-[3px] flex w-10 flex-col items-center justify-between bg-[#46545c]">
        <span className="h-px" />
        <AppLogo className="size-[19px]" />
        <span className="h-[2px] w-full bg-[#6ea6d8]" />
      </button>
    </div>
    <div className="ml-auto flex items-center text-[10px]">
      <div className="flex items-center">
        <span className="flex w-5 justify-center"><Glyph name="chevronUp" className="size-3" /></span>
        <span className="w-5 text-center">62</span>
        <svg viewBox="0 0 16 12" className="mx-[3px] w-[14px]" fill="#35a0e8"><path d="M3 11a3 3 0 0 1 0-6 4 4 0 0 1 7-2 4 4 0 0 1 3 8z" /></svg>
        <svg viewBox="0 0 16 12" className="mx-[3px] w-[14px]" fill="#f0f2f2"><path d="M3 11a3 3 0 0 1 0-6 4 4 0 0 1 7-2 4 4 0 0 1 3 8z" /></svg>
        <svg viewBox="0 0 16 12" className="mx-[3px] w-[14px]" fill="none" stroke="#e8eef0"><path d="M4 3h10v7H4zM15 5v3M1 1v3h3V1zM2.500 4v3" /><path d="M9 4h4v5H9z" fill="#e8eef0" /></svg>
        <svg viewBox="0 0 16 14" className="mx-[3px] w-[14px]" fill="none" stroke="#e8eef0"><path d="M2 13C2 7 7 2 14 2M5 13c0-5 4-8 9-8M8 13c0-3 3-5 6-5M11 13c0-1 1-2 3-2" /></svg>
        <svg viewBox="0 0 16 14" className="mx-[3px] w-[14px]" fill="none" stroke="#e8eef0"><path d="M1 5h3l4-3v10L4 9H1zM10 5c1 1 1 3 0 4M12 3c2 2 2 6 0 8M14 1c3 3 3 9 0 12" /></svg>
      </div>
      <span className="w-8 text-center">NLD</span>
      <time className="w-[54px] text-center leading-[15px]">
        18:19<br />18-4-2021
      </time>
      <button aria-label="Notifications" className="mr-3 ml-4 flex w-[17px] justify-center">
        <svg viewBox="0 0 16 16" className="size-4" fill="none" stroke="#e8eef0"><path d="M1 1h14v11h-4l-3 3v-3H1zM4 4.500h8M4 7h8M4 9.500h5" /></svg>
      </button>
    </div>
  </div>
);

export default function App() {
  return (
    <div className="flex h-screen flex-col overflow-hidden font-['Roboto','Noto_Sans',sans-serif]">
      <TitleBar />
      <Toolbar />
      <div className="flex min-h-0 flex-1">
        <InfoPanel />
        <Toolbox />
        <main className="flex min-w-0 flex-1 flex-col">
          <Tabs />
          <div className="min-h-0 flex-1">
            <Scene />
          </div>
          <QuickOptions />
        </main>
        <Navigator />
      </div>
      <StatusBar />
      <Taskbar />
    </div>
  );
}
